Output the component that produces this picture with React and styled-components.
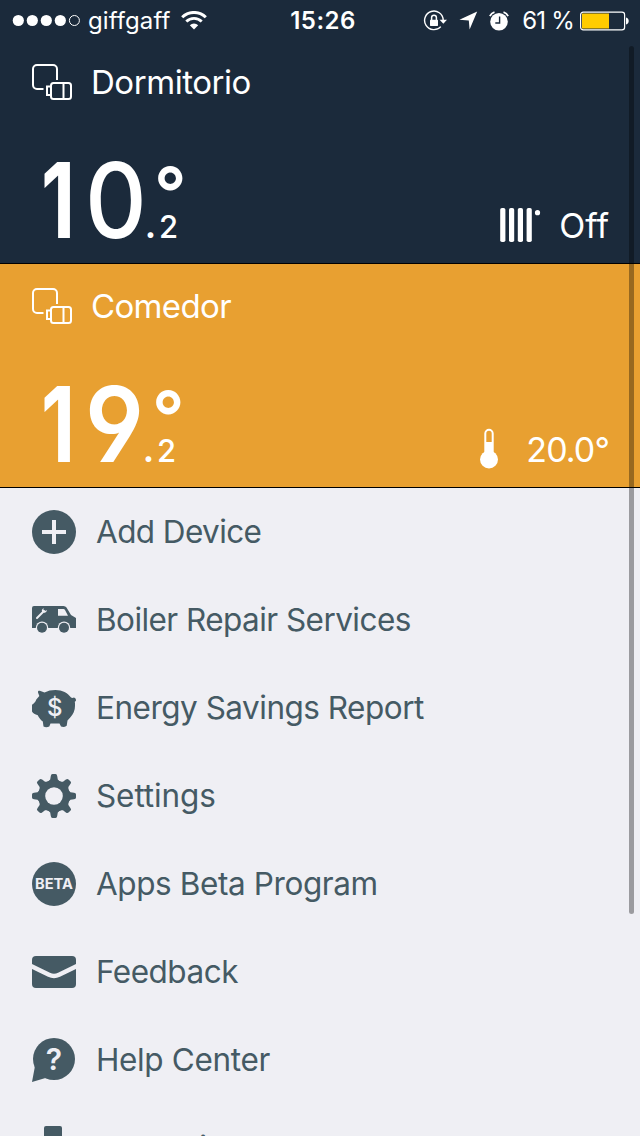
import React from "react";
import styled, { createGlobalStyle } from "styled-components";

function App() {
  return (
    <StPage>
      <GlobalStyle />
      <StStatusBar>
        <StCarrier>
          <SignalIcon />
          <StStatusText $spacing="0.1px">giffgaff</StStatusText>
          <WifiIcon />
        </StCarrier>
        <StClock>15:26</StClock>
        <StIndicators>
          <LockIcon />
          <LocationIcon />
          <AlarmIcon />
          <StBatteryText $spacing="-0.8px">61 %</StBatteryText>
          <BatteryIcon />
        </StIndicators>
      </StStatusBar>
      <StRoom $color="#1b2a3b" $height="223px">
        <StRoomHead>
          <DevicesIcon />
          <StRoomName $spacing="-0.45px">Dormitorio</StRoomName>
        </StRoomHead>
        <StRoomBody>
          <StTemperature>
            <StDigit $width="44.4px" $stretch="0.76" $weight="680">1</StDigit>
            <StDigit $width="59.6px" $stretch="0.92" $weight="540">0</StDigit>
            <Fraction value="2" />
          </StTemperature>
          <StState $gap="17px">
            <RadiatorIcon />
            <StStateText $spacing="0">Off</StStateText>
          </StState>
        </StRoomBody>
      </StRoom>
      <StRoom $color="#e8a031" $height="224px">
        <StRoomHead>
          <DevicesIcon />
          <StRoomName $spacing="-0.65px">Comedor</StRoomName>
        </StRoomHead>
        <StRoomBody>
          <StTemperature>
            <StDigit $width="43.5px" $stretch="0.76" $weight="680">1</StDigit>
            <StDigit $width="58.5px" $stretch="0.94" $weight="560">9</StDigit>
            <Fraction value="2" />
          </StTemperature>
          <StState $gap="28px">
            <ThermometerIcon />
            <StStateText $spacing="-0.9px">20.0°</StStateText>
          </StState>
        </StRoomBody>
      </StRoom>
      <StMenu>
        <StItem>
          <PlusIcon />
          <StLabel $spacing="-0.6px">Add Device</StLabel>
        </StItem>
        <StItem>
          <VanIcon />
          <StLabel $spacing="-0.55px">Boiler Repair Services</StLabel>
        </StItem>
        <StItem>
          <PiggyIcon />
          <StLabel $spacing="-0.5px">Energy Savings Report</StLabel>
        </StItem>
        <StItem>
          <GearIcon />
          <StLabel $spacing="-0.1px">Settings</StLabel>
        </StItem>
        <StItem>
          <StBeta>BETA</StBeta>
          <StLabel $spacing="-0.4px">Apps Beta Program</StLabel>
        </StItem>
        <StItem>
          <MailIcon />
          <StLabel $spacing="-0.5px">Feedback</StLabel>
        </StItem>
        <StItem>
          <HelpIcon />
          <StLabel $spacing="-0.35px">Help Center</StLabel>
        </StItem>
        <StItem>
          <ServiceIcon />
          <StLabel $spacing="-0.2px">In Service</StLabel>
        </StItem>
      </StMenu>
      <StScrollbar />
    </StPage>
  );
}

function Fraction({ value }) {
  return (
    <StFraction>
      <StDegree>°</StDegree>
      <StDecimal>
        <StPoint>.</StPoint>
        {value}
      </StDecimal>
    </StFraction>
  );
}

function SignalIcon() {
  return (
    <svg width="69" height="13" viewBox="0 0 69 13" fill="#fff">
      <circle cx="6.3" cy="6.5" r="5.6" />
      <circle cx="20.3" cy="6.5" r="5.6" />
      <circle cx="34.3" cy="6.5" r="5.6" />
      <circle cx="48.3" cy="6.5" r="5.6" />
      <circle cx="62.4" cy="6.5" r="5" fill="none" stroke="#fff" />
    </svg>
  );
}

function WifiIcon() {
  return (
    <StWifi viewBox="0 0 26 19" fill="none" stroke="#fff">
      <path d="M1.2 6.3a16.8 16.8 0 0 1 23.6 0" strokeWidth="3" />
      <path d="M5.3 10.6a10.9 10.9 0 0 1 15.4 0" strokeWidth="2.8" />
      <path d="M13 18.6l-4.2-4.3a6 6 0 0 1 8.4 0z" fill="#fff" stroke="none" />
    </StWifi>
  );
}

function LockIcon() {
  return (
    <svg width="25" height="22" viewBox="0 0 25 22" fill="none" stroke="#fff">
      <path d="M17.8 16.6A9.3 9.3 0 1 1 20.2 10" strokeWidth="1.4" />
      <path d="M16.6 9.8h7.4l-3.7 4z" fill="#fff" stroke="none" />
      <rect x="7" y="9.7" width="8" height="6.2" rx="0.6" fill="#fff" stroke="none" />
      <path d="M8.6 10V7.6a2.4 2.4 0 0 1 4.8 0V10" strokeWidth="1.5" />
    </svg>
  );
}

function LocationIcon() {
  return (
    <svg width="19" height="19" viewBox="0 0 19 19" fill="#fff">
      <path d="M18.2 0.6L10.6 18.4L9.8 9.4L0.4 8.8z" />
    </svg>
  );
}

function AlarmIcon() {
  return (
    <svg width="20" height="20" viewBox="0 0 20 20" fill="none" stroke="#fff">
      <circle cx="10" cy="10.7" r="8.8" fill="#fff" stroke="none" />
      <path d="M0.9 5.2a7 7 0 0 1 4.6-4.1M19.1 5.2a7 7 0 0 0-4.6-4.1" strokeWidth="1.8" />
      <path d="M10.6 5.5V12H6.3" stroke="#1b2a3b" strokeWidth="1.4" />
    </svg>
  );
}

function BatteryIcon() {
  return (
    <StBattery viewBox="0 0 49 20">
      <rect x="0.6" y="1.1" width="44" height="17.8" rx="2.6" fill="none" stroke="#fff" strokeWidth="1.2" />
      <rect x="2" y="2.5" width="27" height="15" fill="#fc0" />
      <path d="M46 6.5c3.6.4 3.6 6.600 0 7z" fill="#fff" />
    </StBattery>
  );
}

function DevicesIcon() {
  return (
    <svg width="40" height="36" viewBox="0 0 40 36" fill="none" stroke="#fff" strokeWidth="2">
      <path d="M11.5 25H5a4 4 0 0 1-4-4V5a4 4 0 0 1 4-4h16a4 4 0 0 1 4 4v11" />
      <rect x="19" y="19" width="20" height="16" rx="2.5" />
      <path d="M19 22.5h-4v8.500h4M31.5 19v16" />
    </svg>
  );
}

function RadiatorIcon() {
  return (
    <svg width="42" height="36" viewBox="0 0 42 36" fill="#fff">
      <rect x="0.2" y="1" width="5.2" height="34" rx="1.8" />
      <rect x="9" y="1" width="5.2" height="34" rx="1.8" />
      <rect x="17.8" y="1" width="5.2" height="34" rx="1.8" />
      <rect x="26.6" y="1" width="5.2" height="34" rx="1.8" />
      <circle cx="37.5" cy="5.7" r="2.6" />
    </svg>
  );
}

function ThermometerIcon() {
  return (
    <svg width="18" height="42" viewBox="0 0 18 42">
      <path d="M5.3 25V5.5a3.7 3.7 0 0 1 7.4 0V25" fill="none" stroke="#fff" strokeWidth="2" />
      <rect x="5" y="14" width="8" height="12" fill="#fff" />
      <circle cx="9" cy="31.5" r="9" fill="#fff" />
    </svg>
  );
}

function PlusIcon() {
  return (
    <StIcon viewBox="0 0 44 44">
      <circle cx="22" cy="22" r="22" />
      <path d="M22 10v24M10 22h24" stroke="#efeff4" strokeWidth="4" />
    </StIcon>
  );
}

function VanIcon() {
  return (
    <StIcon viewBox="0 0 44 44">
      <path d="M2 8h29.5q2 0 3 1.500l4.500 7.500l5 3V30H0V10q0-2 2-2z" />
      <path d="M26 11h5.500q1 0 1.500 1l3 5.700H26z" fill="#efeff4" />
      <path d="M5 20l7-7" stroke="#efeff4" strokeWidth="2" strokeLinecap="round" />
      <path d="M11.5 10q-3.500 3 0 4.500q3 1 3.500-2.500l-2 1l-1.500-1z" fill="#efeff4" />
      <circle cx="10" cy="29.7" r="6.2" fill="#efeff4" />
      <circle cx="32" cy="29.7" r="6.2" fill="#efeff4" />
      <circle cx="10" cy="29.7" r="5" />
      <circle cx="32" cy="29.7" r="5" />
    </StIcon>
  );
}

function PiggyIcon() {
  return (
    <StIcon viewBox="0 0 44 44">
      <path d="M6 6.500C5.800 4.500 7 4.300 8.500 5l4 1.500C16 4.800 19 4 23.500 4c7 0 12 3 15.300 7.300c1 1 2.200.8 3.200.2c1.700.7 2.300 2 1.800 3.500l-1 .8c1 7-1 12-4.600 15.800l-2.700 3l-.8 5.200c-2 1.400-4 1.400-5.700.7L27.500 37.500h-9L17.300 40.500c-2 1-4 1-5.800 0L10.800 35.500C8.500 34 6.800 31.500 5.800 29.300C3 28.500 1 27.300 0 25.500v-6.800c2-1.200 3.500-3 4.300-5.300L7.300 10z" />
      <StIconText x="22.8" y="29.5" fontSize="24" fontWeight="500">$</StIconText>
    </StIcon>
  );
}

function GearIcon() {
  return (
    <StIcon viewBox="0 0 44 44">
      {[0, 45, 90, 135, 180, 225, 270, 315].map((angle) => (
        <path
          key={angle}
          d="M18.8 2q.2-2 1.700-2h3q1.500 0 1.700 2l.6 3.500l3 3H15.200l3-3z"
          transform={`rotate(${angle} 22 22)`}
        />
      ))}
      <circle cx="22" cy="22" r="12" fill="none" stroke="#455a64" strokeWidth="8" />
      <circle cx="22" cy="22" r="8.8" fill="#efeff4" />
    </StIcon>
  );
}

function MailIcon() {
  return (
    <StIcon viewBox="0 0 44 44">
      <rect y="6" width="44" height="32" rx="4" />
      <path d="M-1 16L17 24.800q5 2.400 10 0L45 16" fill="none" stroke="#efeff4" strokeWidth="4.5" />
    </StIcon>
  );
}

function HelpIcon() {
  return (
    <StIcon viewBox="0 0 44 44">
      <circle cx="22" cy="21" r="21" />
      <path d="M3 28L0 44l13.500-4z" />
      <StIconText x="22" y="32" fontSize="30" fontWeight="620">?</StIconText>
    </StIcon>
  );
}

function ServiceIcon() {
  return (
    <StIcon viewBox="0 0 44 44">
      <rect x="12" width="18" height="44" rx="2" />
    </StIcon>
  );
}

export default App;

const GlobalStyle = createGlobalStyle`
  body {
    margin: 0;
  }
`;

const StPage = styled.div`
  position: relative;
  width: 640px;
  height: 1136px;
  overflow: hidden;
  background-color: #efeff4;
  font-family: Inter, "Liberation Sans", sans-serif;
`;

const StStatusBar = styled.header`
  display: grid;
  grid-template-columns: 1fr auto 1fr;
  align-items: center;
  height: 41px;
  padding: 0 11px 0 12px;
  background-color: #1b2a3b;
  color: #fff;
`;

const StCarrier = styled.div`
  display: flex;
  align-items: center;
  gap: 7px;
`;

const StIndicators = styled.div`
  display: flex;
  align-items: center;
  justify-content: flex-end;
  gap: 11px;
`;

const StStatusText = styled.span`
  font-size: 24px;
  line-height: 28px;
  letter-spacing: ${(props) => props.$spacing};
  white-space: nowrap;
`;

const StBatteryText = styled(StStatusText)`
  padding-left: 2px;
`;

const StClock = styled.span`
  padding-left: 5px;
  font-size: 24px;
  font-weight: 600;
  letter-spacing: 0.5px;
`;

const StWifi = styled.svg`
  width: 26px;
  height: 19px;
  margin-left: 4px;
`;

const StBattery = styled.svg`
  width: 49px;
  height: 20px;
  margin-left: -5px;
`;

const StRoom = styled.section`
  display: flex;
  flex-direction: column;
  justify-content: flex-end;
  box-sizing: border-box;
  height: ${(props) => props.$height};
  border-bottom: 1px solid #000;
  background-color: ${(props) => props.$color};
  color: #fff;
`;

const StRoomHead = styled.div`
  display: flex;
  align-items: center;
  gap: 19px;
  height: 82px;
  padding-left: 32px;
`;

const StRoomName = styled.h2`
  margin: 0;
  font-size: 33px;
  font-weight: 390;
  letter-spacing: ${(props) => props.$spacing};
`;

const StRoomBody = styled.div`
  display: flex;
  justify-content: space-between;
  height: 140px;
  padding: 0 31px 0 41px;
`;

const StTemperature = styled.div`
  display: flex;
`;

const StDigit = styled.span`
  width: ${(props) => props.$width};
  font-size: 104px;
  line-height: 154px;
  font-weight: ${(props) => props.$weight};
  font-feature-settings: "cv04";
  transform: scaleX(${(props) => props.$stretch});
  transform-origin: left;
`;

const StFraction = styled.div`
  display: flex;
  flex-direction: column;
`;

const StDegree = styled.span`
  height: 86px;
  margin-left: 9px;
  font-size: 71px;
  line-height: 138px;
  font-weight: 600;
`;

const StDecimal = styled.span`
  font-size: 31px;
  line-height: 36px;
  font-weight: 460;
`;

const StPoint = styled.span`
  margin-right: 3px;
  font-weight: 800;
`;

const StState = styled.div`
  display: flex;
  align-items: center;
  align-self: flex-end;
  gap: ${(props) => props.$gap};
  height: 76px;
`;

const StStateText = styled.span`
  font-size: 34px;
  font-weight: 370;
  letter-spacing: ${(props) => props.$spacing};
`;

const StMenu = styled.nav`
  display: flex;
  flex-direction: column;
`;

const StItem = styled.div`
  display: flex;
  flex-shrink: 0;
  align-items: center;
  gap: 20px;
  height: 88px;
  padding-left: 32px;
  color: #455a64;
`;

const StLabel = styled.span`
  font-size: 31.5px;
  line-height: 40px;
  font-weight: 380;
  letter-spacing: ${(props) => props.$spacing};
  white-space: nowrap;
`;

const StIcon = styled.svg`
  width: 44px;
  height: 44px;
  fill: #455a64;
`;

const StIconText = styled.text`
  fill: #efeff4;
  text-anchor: middle;
`;

const StBeta = styled.div`
  width: 44px;
  height: 44px;
  border-radius: 50%;
  background-color: #455a64;
  color: #efeff4;
  font-size: 14.6px;
  font-weight: 700;
  line-height: 45px;
  text-align: center;
`;

const StScrollbar = styled.div`
  position: absolute;
  top: 46px;
  right: 6px;
  width: 5px;
  height: 868px;
  border-radius: 3px;
  background-color: rgba(0, 0, 0, 0.35);
`;
